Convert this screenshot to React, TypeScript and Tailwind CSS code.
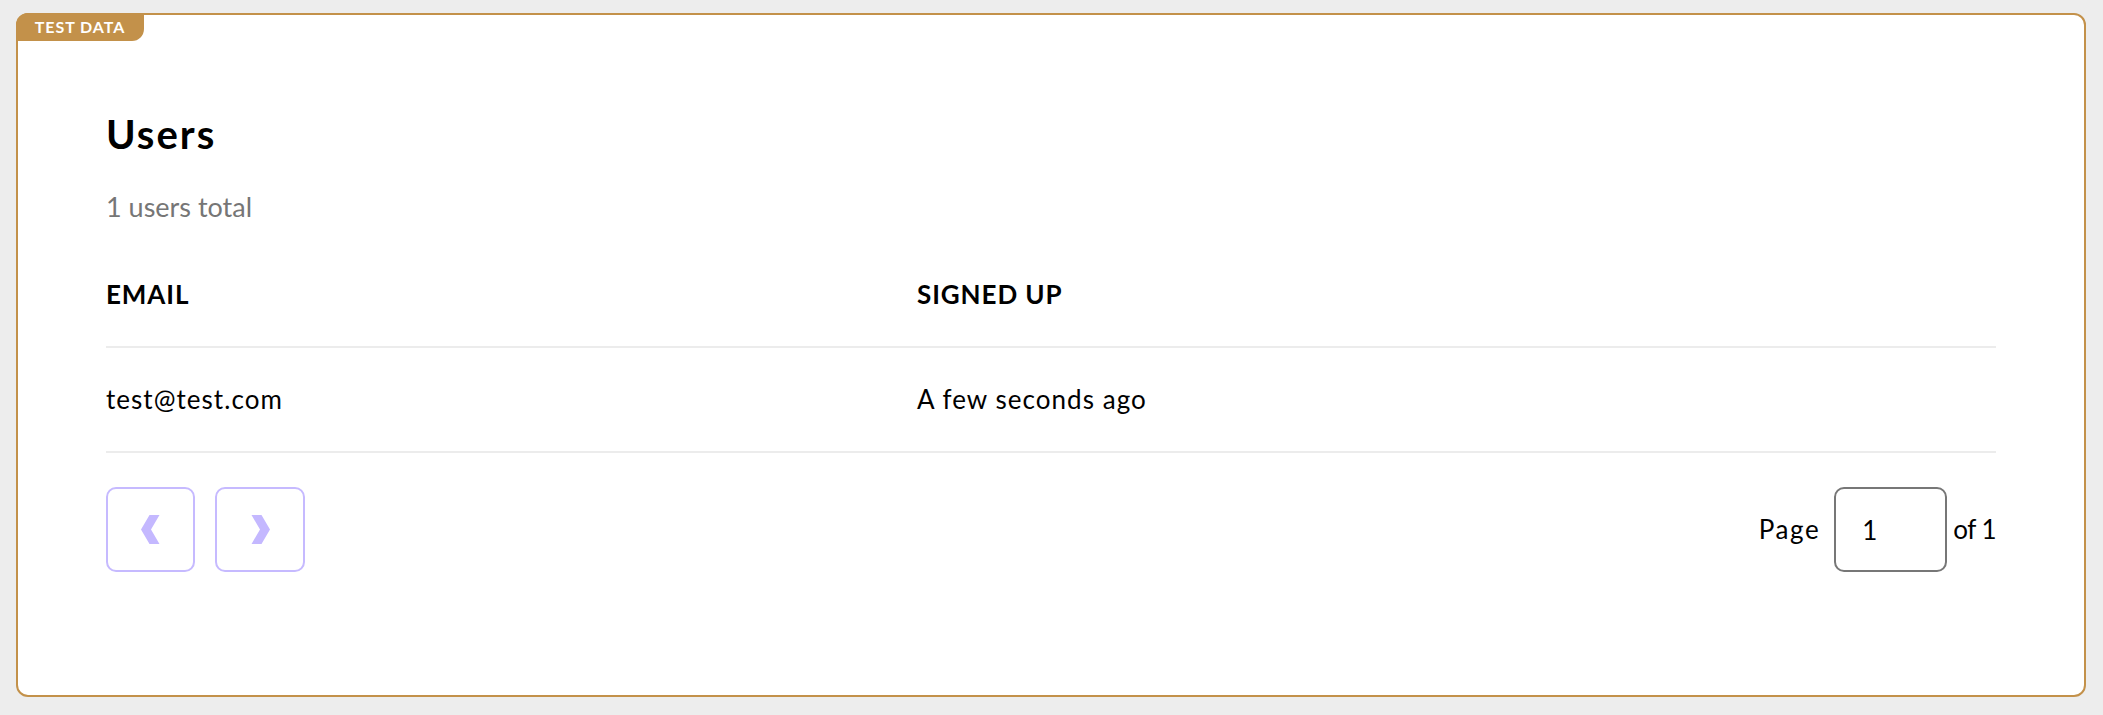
import React from 'react';

const font = { fontFamily: 'Lato, "Open Sans", sans-serif' };

const Chevron = ({ dir }: { dir: 'left' | 'right' }) => (
  <svg width="19" height="29" viewBox="0 0 19 29" className="text-[#c4b8ff]">
    {dir === 'left' ? (
      <polygon points="8.5,0 18.5,0 10,14.5 18.5,29 8.5,29 0,14.5" fill="currentColor" />
    ) : (
      <polygon points="0.5,0 10.5,0 19,14.5 10.5,29 0.5,29 9,14.5" fill="currentColor" />
    )}
  </svg>
);

const users = [{ email: 'test@test.com', signedUp: 'A few seconds ago' }];

export default function App() {
  return (
    <div className="h-[715px] bg-[#ededed] pt-[13px] pl-4 pr-[17px] pb-[18px]" style={font}>
      <div className="relative h-full bg-white border-2 border-[#c3914a] rounded-[12px] px-[88px] pt-[95px]">
        {/* badge sits on top of the border */}
        <div className="absolute -top-[2px] -left-[2px] w-[128px] h-[28px] bg-[#c3914a] rounded-tl-[12px] rounded-br-[12px] flex items-center justify-center text-white font-bold text-[16px] tracking-[0.06em] leading-none">
          TEST DATA
        </div>

        <h1 className="text-[40px] leading-[48px] font-bold tracking-[0.05em] text-black">Users</h1>
        <p className="mt-[32px] text-[27px] leading-[34px] text-[#767676]">{users.length} users total</p>

        <div className="mt-[19px]">
          <div className="flex items-center h-[105px] border-b-2 border-[#ececec] text-[26px] font-bold tracking-[0.035em] text-black">
            <div className="w-[811px]">EMAIL</div>
            <div>SIGNED UP</div>
          </div>
          {users.map(u => (
            <div key={u.email} className="flex items-center h-[105px] border-b-2 border-[#ececec] text-[26px] tracking-[0.04em] text-black">
              <div className="w-[811px]">{u.email}</div>
              <div>{u.signedUp}</div>
            </div>
          ))}
        </div>

        <div className="mt-[34px] flex items-center justify-between">
          <div className="flex gap-5">
            <button className="w-[89px] h-[85px] rounded-[10px] border-2 border-[#c6baff] flex items-center justify-center">
              <Chevron dir="left" />
            </button>
            <button className="w-[90px] h-[85px] rounded-[10px] border-2 border-[#c6baff] flex items-center justify-center">
              <Chevron dir="right" />
            </button>
          </div>
          <div className="flex items-center text-[26px] text-black">
            <span className="tracking-[0.06em]">Page</span>
            <input
              defaultValue="1"
              className="ml-[14px] mr-[6px] w-[113px] h-[85px] rounded-[10px] border-2 border-[#777777] pl-[26px] text-[26px] outline-none"
              style={font}
            />
            <span className="tracking-[-0.02em]">of 1</span>
          </div>
        </div>
      </div>
    </div>
  );
}
